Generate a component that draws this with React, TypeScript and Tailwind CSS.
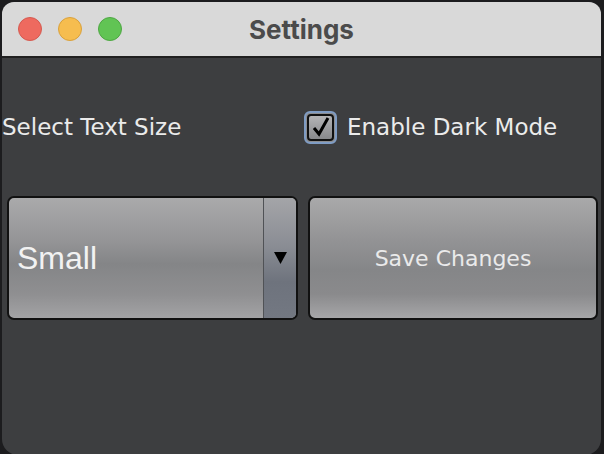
import React from "react";

export default function App() {
  return (
    <div className="w-[604px] h-[454px] bg-[#1c1c1e] overflow-hidden">
      <div className="ml-[2px] mt-[2px] w-[599px] h-[453px] rounded-[12px] rounded-b-[16px] overflow-hidden bg-[#3d3e40] flex flex-col">
        <div className="h-[56px] bg-[#d9d9d9] border-b-2 border-[#202020] flex items-center relative">
          <div className="flex gap-[16px] pl-[16px]">
            <div className="w-[24px] h-[24px] rounded-full bg-[#ee6a5f] border border-[#d55a50]" />
            <div className="w-[24px] h-[24px] rounded-full bg-[#f6bd4f] border border-[#d9a13c]" />
            <div className="w-[24px] h-[24px] rounded-full bg-[#61c454] border border-[#4ea743]" />
          </div>
          <div className="absolute left-0 right-0 top-0 h-full flex items-center justify-center text-[26px] font-bold text-[#4b4b4b] font-['Inter',sans-serif] pointer-events-none">
            Settings
          </div>
        </div>
        <div className="flex items-center h-[56px] mt-[41px] font-['DejaVu_Sans',sans-serif] text-[#ebebeb] text-[23px]">
          <div className="w-[302px] pl-[0px]">Select Text Size</div>
          <div className="flex items-center gap-[10px]">
            <div className="w-[33px] h-[33px] rounded-[6px] border-2 border-[#7f9cc4] bg-[#8c8d90] flex items-center justify-center">
              <div className="w-[27px] h-[27px] rounded-[4px] border-2 border-[#111] bg-gradient-to-b from-[#b4b4b6] to-[#88898c] flex items-center justify-center">
                <svg width="18" height="20" viewBox="0 0 18 20">
                  <path d="M2 11 L7 17 L16 1" stroke="#000" strokeWidth="3" fill="none" strokeLinejoin="miter" />
                </svg>
              </div>
            </div>
            <span>Enable Dark Mode</span>
          </div>
        </div>
        <div className="flex gap-[10px] mt-[41px] pl-[5px] pr-[3px]">
          <div className="w-[291px] h-[124px] rounded-[7px] border-2 border-[#111] overflow-hidden flex bg-[linear-gradient(to_bottom,#aaaaab_0%,#959597_35%,#848587_55%,#8f8f91_80%,#a3a3a5_100%)]">
            <div className="flex-1 flex items-center pl-[8px] text-[32px] text-[#f2f2f2] font-['Liberation_Sans',sans-serif]">
              Small
            </div>
            <div className="w-[33px] border-l border-[#505256] bg-[linear-gradient(to_bottom,#a4a5a8_0%,#8a8d94_40%,#6e737d_70%,#737882_100%)] flex items-center justify-center">
              <svg width="13" height="12" viewBox="0 0 13 12"><path d="M0 0 H13 L6.5 12 Z" fill="#000" /></svg>
            </div>
          </div>
          <div className="flex-1 h-[124px] rounded-[7px] border-2 border-[#111] flex items-center justify-center bg-[linear-gradient(to_bottom,#a9a9aa_0%,#939395_35%,#858688_60%,#8a8a8c_80%,#a6a6a8_100%)] text-[22px] text-[#eaeaea] font-['DejaVu_Sans',sans-serif]">
            Save Changes
          </div>
        </div>
      </div>
    </div>
  );
}
